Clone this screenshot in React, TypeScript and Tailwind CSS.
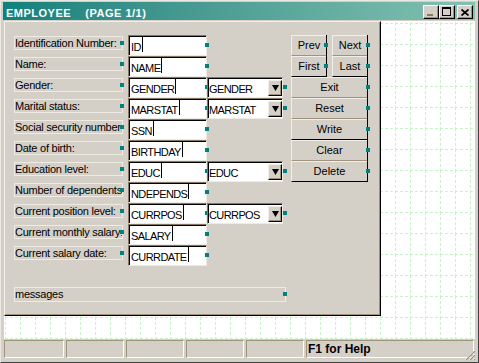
import React from "react";

const rows: { label: string; field: string; combo?: string }[] = [
  { label: "Identification Number:", field: "ID" },
  { label: "Name:", field: "NAME" },
  { label: "Gender:", field: "GENDER", combo: "GENDER" },
  { label: "Marital status:", field: "MARSTAT", combo: "MARSTAT" },
  { label: "Social security number:", field: "SSN" },
  { label: "Date of birth:", field: "BIRTHDAY" },
  { label: "Education level:", field: "EDUC", combo: "EDUC" },
  { label: "Number of dependents:", field: "NDEPENDS" },
  { label: "Current position level:", field: "CURRPOS", combo: "CURRPOS" },
  { label: "Current monthly salary:", field: "SALARY" },
  { label: "Current salary date:", field: "CURRDATE" },
];

function Field({ text }: { text: string }) {
  return (
    <div className="ml-[5px] w-[79px] h-[21px] flex items-start bg-white border border-t-[#857760] border-l-[#857760] border-b-[#eeebe5] border-r-[#eeebe5] shadow-[inset_1px_1px_0_#000] pl-[2px]">
      <span className="mt-[5px] leading-[13px] text-[11px] tracking-[-0.6px] whitespace-nowrap">{text}</span>
      <span className="mt-px ml-px w-px h-[15px] bg-black shrink-0" />
    </div>
  );
}

function Combo({ text }: { text: string }) {
  return (
    <div className="relative w-[76px] h-[21px] flex items-start bg-white border border-t-[#857760] border-l-[#857760] border-b-[#eeebe5] border-r-[#eeebe5] shadow-[inset_1px_1px_0_#000] pl-px">
      <span className="mt-[5px] leading-[13px] text-[11px] tracking-[-0.6px] whitespace-nowrap">{text}</span>
      <div className="ml-auto mt-[2px] w-[14px] h-[16px] flex items-center justify-center bg-[#d4d0c8] border border-t-[#f2efea] border-l-[#f2efea] border-r-black border-b-black shadow-[inset_-1px_-1px_0_#a0937d]">
        <svg width="7" height="6" viewBox="0 0 7 6">
          <polygon points="0,0 7,0 3.5,6" fill="#000" />
        </svg>
      </div>
    </div>
  );
}

function Row({ label, field, combo }: { label: string; field: string; combo?: string }) {
  return (
    <div className="relative flex h-[21px]">
      <div className="w-[109px] h-[14px] mt-px border border-[#eeebe5] overflow-hidden whitespace-nowrap text-[11px] leading-[12px] tracking-[-0.25px]">
        {label}
      </div>
      <span className="absolute left-[106px] top-[6px] w-[4px] h-[4px] bg-[#008080]" />
      <Field text={field} />
      <span className="absolute left-[191px] top-[8px] w-[4px] h-[4px] bg-[#008080]" />
      {combo && <Combo text={combo} />}
      {combo && <span className="absolute left-[269px] top-[8px] w-[4px] h-[4px] bg-[#008080]" />}
    </div>
  );
}

function Btn({ label, last, sq }: { label: string; last?: boolean; sq: "a" | "b" | "c" }) {
  return (
    <div
      className={
        "relative flex items-center justify-center h-[21px] bg-[#d4d0c8] border-t border-l border-b border-t-[#f2efea] border-l-[#f2efea] text-[11px] leading-[13px] " +
        (last ? "border-b-black" : "border-b-[#a0937d]")
      }
    >
      {label}
      {sq === "a" && <span className="absolute left-[32px] top-[7px] w-[4px] h-[4px] bg-[#008080]" />}
      {sq === "b" && <span className="absolute left-[33px] top-[7px] w-[4px] h-[4px] bg-[#008080]" />}
      {sq === "c" && <span className="absolute left-[74px] top-[7px] w-[4px] h-[4px] bg-[#008080]" />}
    </div>
  );
}

function Grid() {
  return (
    <svg className="absolute inset-0" width="471" height="318">
      <defs>
        <pattern id="grid" width="15" height="21" patternUnits="userSpaceOnUse" x="1" y="2">
          <line x1="0.5" y1="0" x2="0.5" y2="21" stroke="#c8f2c8" strokeDasharray="3 2" />
          <line x1="0" y1="0.5" x2="15" y2="0.5" stroke="#c8f2c8" strokeDasharray="3 2" />
        </pattern>
      </defs>
      <rect width="471" height="318" fill="url(#grid)" />
    </svg>
  );
}

export default function App() {
  return (
    <div className="w-[479px] h-[363px] bg-[#d4d0c8] border border-t-[#ebe8e2] border-l-[#ebe8e2] border-r-[#404040] border-b-[#404040] flex flex-col font-['Liberation_Sans',Arial,sans-serif] text-black overflow-hidden">
      {/* Title bar */}
      <div className="ml-[2px] mt-px w-[472px] h-[18px] flex items-center justify-between pl-[3px] pr-[2px] bg-gradient-to-r from-[#0e807c] to-[#82c2b2]">
        <span className="pt-[3px] leading-[14px] text-[11px] font-bold tracking-[0.5px] text-white whitespace-pre">
          EMPLOYEE    (PAGE 1/1)
        </span>
        <div className="flex mt-[2px]">
          <div className="w-[16px] h-[14px] bg-[#d4d0c8] border border-t-white border-l-white border-r-black border-b-black shadow-[inset_-1px_-1px_0_#a0937d] relative">
            <span className="absolute left-[3px] top-[8px] w-[6px] h-[2px] bg-[#8a7a5a]" />
          </div>
          <div className="w-[16px] h-[14px] bg-[#d4d0c8] border border-t-white border-l-white border-r-black border-b-black shadow-[inset_-1px_-1px_0_#a0937d] relative">
            <span className="absolute left-[2px] top-[1px] w-[9px] h-[9px] border border-black border-t-2" />
          </div>
          <div className="ml-[2px] w-[16px] h-[14px] bg-[#d4d0c8] border border-t-white border-l-white border-r-black border-b-black shadow-[inset_-1px_-1px_0_#a0937d] flex items-center justify-center">
            <svg width="8" height="7" viewBox="0 0 8 7">
              <path d="M0.5 0.5 L7.5 6.5 M7.5 0.5 L0.5 6.5" stroke="#000" strokeWidth="1.7" />
            </svg>
          </div>
        </div>
      </div>

      {/* MDI client */}
      <div className="relative ml-[3px] mt-px w-[471px] h-[318px] bg-white overflow-hidden">
        <Grid />
        <div className="relative w-[377px] h-[295px] bg-[#d4d0c8] border border-t-[#f2efea] border-l-[#f2efea] border-r-black border-b-black shadow-[inset_-1px_-1px_0_#a0937d] pt-[13px] pl-[9px] flex flex-col">
          <div className="flex">
            <div className="w-[277px] flex flex-col">
              {rows.map((r) => (
                <Row key={r.label} label={r.label} field={r.field} combo={r.combo} />
              ))}
            </div>
            <div className="w-[77px] flex flex-col">
              <div className="flex">
                <div className="w-[36px] flex flex-col border-r border-black">
                  <Btn label="Prev" sq="a" />
                  <Btn label="First" sq="a" last />
                </div>
                <div className="w-[5px]" />
                <div className="w-[36px] flex flex-col border-r border-black">
                  <Btn label="Next" sq="b" />
                  <Btn label="Last" sq="b" last />
                </div>
              </div>
              <div className="flex flex-col border-r border-black">
                <Btn label="Exit" sq="c" />
                <Btn label="Reset" sq="c" />
                <Btn label="Write" sq="c" last />
              </div>
              <div className="flex flex-col border-r border-black">
                <Btn label="Clear" sq="c" />
                <Btn label="Delete" sq="c" last />
              </div>
            </div>
          </div>
          <div className="relative mt-[21px] w-[272px] h-[15px] border border-[#eeebe5] text-[11px] leading-[12px] tracking-[-0.25px]">
            messages
            <span className="absolute left-[268px] top-[4px] w-[4px] h-[4px] bg-[#008080]" />
          </div>
        </div>
      </div>

      {/* Status bar */}
      <div className="relative ml-[3px] h-[23px] pt-px flex gap-[2px]">
        <div className="w-[60px] h-[18px] border border-t-[#a0937d] border-l-[#a0937d] border-b-white border-r-white" />
        <div className="w-[58px] h-[18px] border border-t-[#a0937d] border-l-[#a0937d] border-b-white border-r-white" />
        <div className="w-[58px] h-[18px] border border-t-[#a0937d] border-l-[#a0937d] border-b-white border-r-white" />
        <div className="w-[58px] h-[18px] border border-t-[#a0937d] border-l-[#a0937d] border-b-white border-r-white" />
        <div className="w-[58px] h-[18px] border border-t-[#a0937d] border-l-[#a0937d] border-b-white border-r-white" />
        <div className="w-[168px] h-[18px] border border-t-[#a0937d] border-l-[#a0937d] border-b-white border-r-white pl-px text-[12px] leading-[16px] font-bold whitespace-nowrap">
          F1 for Help
        </div>
        <svg className="absolute right-[2px] bottom-[1px]" width="12" height="12" viewBox="0 0 12 12">
          <path d="M11 1 L1 11 M11 5 L5 11 M11 9 L9 11" stroke="#ffffff" strokeWidth="1" />
          <path d="M11 2 L2 11 M11 6 L6 11 M11 10 L10 11" stroke="#a0937d" strokeWidth="1.2" />
        </svg>
      </div>
    </div>
  );
}
